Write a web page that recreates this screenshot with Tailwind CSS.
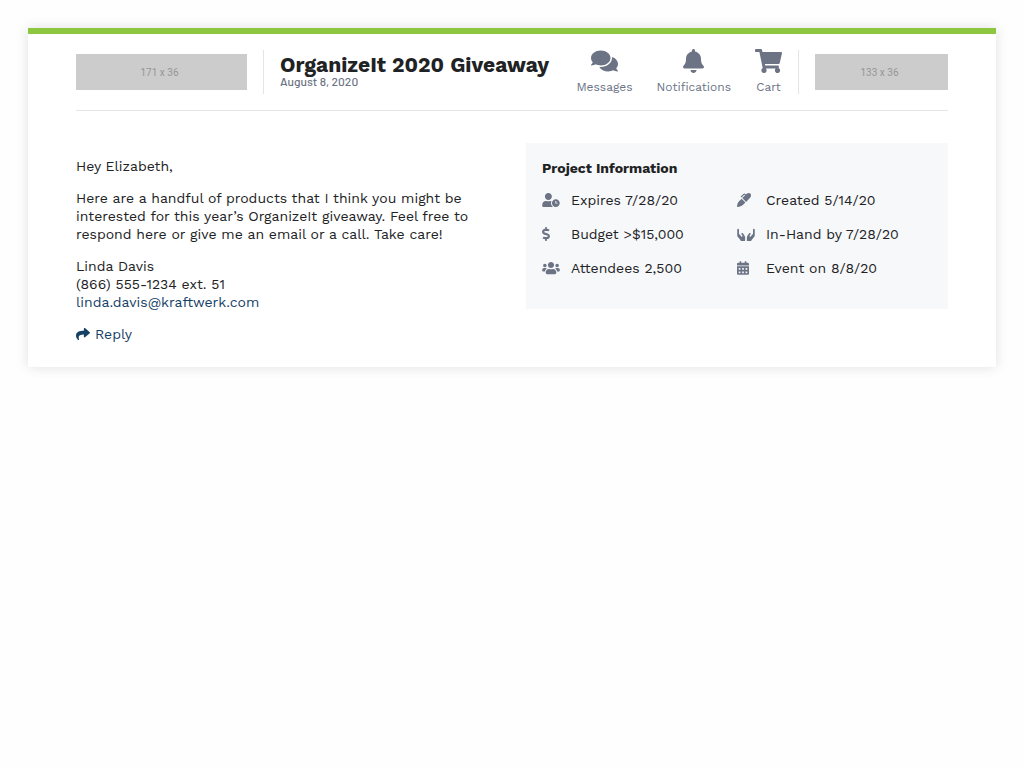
<!DOCTYPE html>
<html lang="en">
<head>
<meta charset="utf-8">
<meta name="viewport" content="width=device-width, initial-scale=1">
<title>OrganizeIt 2020 Giveaway</title>
<script src="https://cdn.jsdelivr.net/npm/@tailwindcss/browser@4"></script>
</head>
<body class="bg-[#fefefe] p-7 font-['Work_Sans',Inter,sans-serif] text-sm leading-[18px] text-[#212224]">
<main class="border-t-6 border-[#8dc63f] bg-white px-12 pt-4 pb-6 shadow-[0_0_12px_rgba(0,0,0,0.12)]">
  <header class="flex items-center border-b border-[#e5e5e5] pb-4">
    <div class="flex h-9 w-[171px] shrink-0 items-center justify-center bg-[#ccc] pr-1 font-['Roboto',sans-serif] text-[10px] text-[#969696]" role="img" aria-label="Company logo"><span class="pt-0.5">171 x 36</span></div>
    <div class="ml-4 flex h-11 flex-1 items-start border-l border-[#e5e5e5] pl-4">
      <div class="pt-[3px]">
        <h1 class="text-[21px] leading-[23px] font-bold whitespace-nowrap">OrganizeIt 2020 Giveaway</h1>
        <p class="font-['Barlow',Roboto,sans-serif] text-xs leading-[10px] font-medium text-[#6b7385]">August 8, 2020</p>
      </div>
    </div>
    <nav class="flex h-11 gap-6 border-r border-[#e5e5e5] pr-4 text-xs leading-[14px] text-[#6b7385]">
      <a href="#" class="flex flex-col items-center justify-between">
        <svg class="-mt-px h-6 w-[27px]" viewBox="0 0 576 512" fill="currentColor" aria-hidden="true"><path d="M416 192c0-88.4-93.1-160-208-160S0 103.6 0 192c0 34.3 14.1 65.9 38 92-13.4 30.2-35.5 54.2-35.8 54.5-2.2 2.3-2.8 5.7-1.5 8.7S4.8 352 8 352c36.6 0 66.9-12.3 88.7-25 32.2 15.7 70.3 25 111.3 25 114.9 0 208-71.6 208-160zm122 220c23.9-26 38-57.7 38-92 0-66.9-53.5-124.2-129.3-148.1.9 6.6 1.3 13.3 1.3 20.1 0 105.9-107.7 192-240 192-10.8 0-21.3-.8-31.7-1.9C207.8 439.6 281.8 480 368 480c41 0 79.1-9.2 111.3-25 21.8 12.7 52.1 25 88.7 25 3.2 0 6.1-1.9 7.3-4.8 1.3-2.9.7-6.3-1.5-8.7-.3-.3-22.4-24.2-35.8-54.5z"/></svg>
        <span>Messages</span>
      </a>
      <a href="#" class="flex flex-col items-center justify-between">
        <svg class="-mt-px h-6 w-[21px]" viewBox="0 0 448 512" fill="currentColor" aria-hidden="true"><path d="M224 512c35.32 0 63.97-28.65 63.97-64H160.03c0 35.35 28.65 64 63.97 64zm215.39-149.71c-19.32-20.76-55.47-51.99-55.47-154.29 0-77.7-54.48-139.9-127.94-155.16V32c0-17.67-14.32-32-31.98-32s-31.98 14.33-31.98 32v20.84C118.56 68.1 64.08 130.3 64.08 208c0 102.3-36.15 133.53-55.47 154.29-6 6.45-8.66 14.16-8.61 21.71.11 16.4 12.98 32 32.1 32h383.8c19.12 0 32-15.6 32.1-32 .05-7.55-2.61-15.27-8.61-21.71z"/></svg>
        <span>Notifications</span>
      </a>
      <a href="#" class="flex flex-col items-center justify-between">
        <svg class="-mt-px h-6 w-[27px]" viewBox="0 0 576 512" fill="currentColor" aria-hidden="true"><path d="M528.12 301.319l47.273-208C578.806 78.301 567.391 64 551.99 64H159.208l-9.166-44.81C147.758 8.021 137.93 0 126.529 0H24C10.745 0 0 10.745 0 24v16c0 13.255 10.745 24 24 24h69.883l70.248 343.435C147.325 417.1 136 435.222 136 456c0 30.928 25.072 56 56 56s56-25.072 56-56c0-15.674-6.447-29.835-16.824-40h209.647C430.447 426.165 424 440.326 424 456c0 30.928 25.072 56 56 56s56-25.072 56-56c0-22.172-12.888-41.332-31.579-50.405l5.517-24.276c3.413-15.018-8.002-29.319-23.403-29.319H218.117l-6.545-32h293.145c11.206 0 20.92-7.754 23.403-18.681z"/></svg>
        <span>Cart</span>
      </a>
    </nav>
    <div class="ml-4 flex h-9 w-[133px] shrink-0 items-center justify-center bg-[#ccc] pr-1 font-['Roboto',sans-serif] text-[10px] text-[#969696]" role="img" aria-label="Partner logo"><span class="pt-0.5">133 x 36</span></div>
  </header>

  <div class="grid grid-cols-[minmax(0,1fr)_422px] items-start gap-x-6 pt-8">
    <section class="flex flex-col gap-3.5 pt-[14px]">
      <p>Hey Elizabeth,</p>
      <p>Here are a handful of products that I think you might be<br>interested for this year’s OrganizeIt giveaway. Feel free to<br>respond here or give me an email or a call. Take care!</p>
      <address class="not-italic">Linda Davis<br>(866) 555-1234 ext. 51<br><a href="mailto:linda.davis@kraftwerk.com" class="text-[#154166]">linda.davis@kraftwerk.com</a></address>
      <a href="#" class="flex items-center gap-[5px] text-[#154166]">
        <svg class="size-3.5" viewBox="0 0 512 512" fill="currentColor" aria-hidden="true"><path d="M503.691 189.836L327.687 37.851C312.281 24.546 288 35.347 288 56.015v80.053C127.371 137.907 0 170.1 0 322.326c0 61.441 39.581 122.309 83.333 154.132 13.653 9.931 33.111-2.533 28.077-18.631C66.066 312.814 132.917 274.316 288 272.085V360c0 20.7 24.3 31.453 39.687 18.164l176.004-152c11.071-9.562 11.086-26.753 0-36.328z"/></svg>
        <span>Reply</span>
      </a>
    </section>
    <section class="bg-[#f7f8fa] px-4 pt-4 pb-8">
      <h2 class="font-bold">Project Information</h2>
      <ul class="mt-3.5 grid grid-cols-2 gap-y-4">
        <li class="flex items-center gap-[11px]"><svg class="h-3.5 w-[18px]" viewBox="0 0 640 512" fill="#6b7385" aria-hidden="true"><path d="M496 224c-79.6 0-144 64.4-144 144s64.4 144 144 144 144-64.4 144-144-64.4-144-144-144zm64 150.3c0 5.3-4.4 9.7-9.7 9.7h-60.6c-5.3 0-9.7-4.4-9.7-9.7v-76.6c0-5.3 4.4-9.7 9.7-9.7h12.6c5.3 0 9.7 4.4 9.7 9.7V352h38.3c5.3 0 9.7 4.4 9.7 9.7v12.6zM320 368c0-27.8 6.7-54.1 18.2-77.5-8-1.5-16.2-2.5-24.6-2.5h-16.7c-22.2 10.2-46.9 16-72.9 16s-50.6-5.8-72.9-16h-16.7C60.2 288 0 348.2 0 422.4V464c0 26.5 21.5 48 48 48h347.1c-45.3-31.9-75.1-84.5-75.1-144zm-96-112c70.7 0 128-57.3 128-128S294.7 0 224 0 96 57.3 96 128s57.3 128 128 128z"/></svg><span>Expires 7/28/20</span></li>
        <li class="flex items-center gap-[11px]"><span class="w-[18px]"><svg class="size-3.5" viewBox="0 0 14 14" fill="#6b7385" aria-hidden="true"><path d="M4.6 5.8L8.4 9.6L5.9 12C4.5 13.2 2.6 13.8 0.7 14Q0 14 0 13.3C.2 11.4.8 9.6 2.1 8.2ZM5.3 5.1L8.2 2.2L7.2 1.8L4.8 4.2Q4.3 4.5 3.9 4.1Q3.6 3.7 4 3.3L6.4 .9Q7.4 0 8.4 .9L9 1.4L9.7 .7C11 -.2 12.6 -.2 13.4 .6C14.2 1.4 14.2 3 13.3 4.6L9.1 8.9Z"/></svg></span><span>Created 5/14/20</span></li>
        <li class="flex items-center gap-[11px]"><span class="w-[18px]"><svg class="h-3.5 w-2" viewBox="0 0 288 512" fill="#6b7385" aria-hidden="true"><path d="M209.2 233.4l-108-31.6C88.7 198.2 80 186.5 80 173.5c0-16.3 13.2-29.5 29.5-29.5h66.3c12.2 0 24.2 3.7 34.2 10.5 6.1 4.1 14.3 3.1 19.5-2l34.8-34c7.1-6.9 6.1-18.4-1.8-24.5C238 74.8 207.4 64.1 176 64V16c0-8.8-7.2-16-16-16h-32c-8.8 0-16 7.2-16 16v48h-2.5C45.8 64-5.4 118.7.5 183.6c4.2 46.1 39.4 83.6 83.8 96.6l102.5 30c12.5 3.7 21.2 15.3 21.2 28.3 0 16.3-13.2 29.5-29.5 29.5h-66.3C100 368 88 364.3 78 357.5c-6.1-4.1-14.3-3.1-19.5 2l-34.8 34c-7.1 6.9-6.1 18.4 1.8 24.5 24.5 19.2 55.1 29.9 86.5 30v48c0 8.8 7.2 16 16 16h32c8.8 0 16-7.2 16-16v-48.2c46.6-.9 90.3-28.6 105.7-72.7 21.5-61.6-14.6-124.8-72.5-141.7z"/></svg></span><span>Budget &gt;$15,000</span></li>
        <li class="flex items-center gap-[11px]"><svg class="h-3.5 w-[18px]" viewBox="0 0 640 512" fill="#6b7385" aria-hidden="true"><path d="M204.8 230.4c-10.6-14.1-30.7-17-44.8-6.4-14.1 10.6-17 30.7-6.4 44.8l38.1 50.8c4.8 6.4 4.1 15.3-1.5 20.9l-12.8 12.8c-6.7 6.7-17.6 6.2-23.6-1.1L64 244.4V96c0-17.7-14.3-32-32-32S0 78.3 0 96v218.4c0 10.9 3.7 21.5 10.5 30l104.1 134.3c5 6.5 8.4 13.9 10.4 21.7 1.8 6.9 8.1 11.6 15.3 11.6H272c8.8 0 16-7.2 16-16V384c0-27.7-9-54.6-25.6-76.8l-57.6-76.8zM608 64c-17.7 0-32 14.3-32 32v148.4l-89.8 107.8c-6 7.2-17 7.7-23.6 1.1l-12.8-12.8c-5.6-5.6-6.3-14.5-1.5-20.9l38.1-50.8c10.6-14.1 7.7-34.2-6.4-44.8-14.1-10.6-34.2-7.7-44.8 6.4l-57.6 76.8C361 329.4 352 356.3 352 384v112c0 8.8 7.2 16 16 16h131.7c7.1 0 13.5-4.7 15.3-11.6 2-7.8 5.4-15.2 10.4-21.7l104.1-134.3c6.8-8.5 10.5-19.1 10.5-30V96c0-17.7-14.3-32-32-32z"/></svg><span>In-Hand by 7/28/20</span></li>
        <li class="flex items-center gap-[11px]"><svg class="h-3.5 w-[18px]" viewBox="0 0 640 512" fill="#6b7385" aria-hidden="true"><path d="M96 224c35.3 0 64-28.7 64-64s-28.7-64-64-64-64 28.7-64 64 28.7 64 64 64zm448 0c35.3 0 64-28.7 64-64s-28.7-64-64-64-64 28.7-64 64 28.7 64 64 64zm32 32h-64c-17.6 0-33.5 7.1-45.1 18.6 40.3 22.1 68.9 62 75.1 109.4h66c17.7 0 32-14.3 32-32v-32c0-35.3-28.7-64-64-64zm-256 0c61.9 0 112-50.1 112-112S381.9 32 320 32 208 82.1 208 144s50.1 112 112 112zm76.8 32h-8.3c-20.8 10-43.9 16-68.5 16s-47.6-6-68.5-16h-8.3C179.6 288 128 339.6 128 403.2V432c0 26.5 21.5 48 48 48h288c26.5 0 48-21.5 48-48v-28.8c0-63.6-51.6-115.2-115.2-115.2zm-223.7-13.4C161.5 263.1 145.6 256 128 256H64c-35.3 0-64 28.7-64 64v32c0 17.7 14.3 32 32 32h65.9c6.3-47.4 34.9-87.3 75.2-109.4z"/></svg><span>Attendees 2,500</span></li>
        <li class="flex items-center gap-[11px]"><span class="w-[18px]"><svg class="h-3.5 w-3" viewBox="0 0 448 512" fill="#6b7385" fill-rule="evenodd" aria-hidden="true"><path d="M0 464c0 26.5 21.5 48 48 48h352c26.5 0 48-21.5 48-48V192H0zM64 256h64v64H64zm128 0h64v64h-64zm128 0h64v64h-64zM64 384h64v64H64zm128 0h64v64h-64zm128 0h64v64h-64zM400 64h-48V16c0-8.8-7.2-16-16-16h-32c-8.8 0-16 7.2-16 16v48H160V16c0-8.8-7.2-16-16-16h-32c-8.8 0-16 7.2-16 16v48H48C21.5 64 0 85.5 0 112v48h448v-48c0-26.5-21.5-48-48-48z"/></svg></span><span>Event on 8/8/20</span></li>
      </ul>
    </section>
  </div>
</main>
</body>
</html>
